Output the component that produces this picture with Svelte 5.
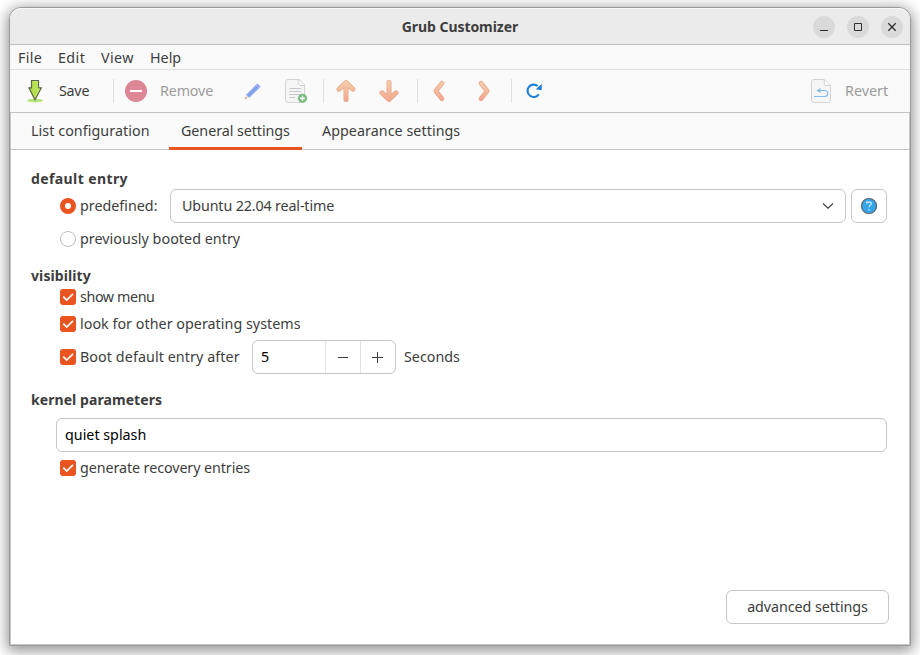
<script>
  let tab = $state('General settings');
  let boot = $state('predefined');
  let checks = $state({ menu: true, os: true, timeout: true, recovery: true });
  let seconds = $state(5);
  let kernel = $state('quiet splash');
  const tabs = [
    { name: 'List configuration', width: 158, spacing: 0.06 },
    { name: 'General settings', width: 133, spacing: -0.06 },
    { name: 'Appearance settings', width: 170, spacing: 0.05 },
  ];
</script>

{#snippet check(key, label, spacing)}
  <label class="option">
    <input type="checkbox" bind:checked={checks[key]} />
    <span class="box" class:on={checks[key]}>
      <svg width="16" height="16" viewBox="0 0 16 16"><path d="M3.3 7.6 6.7 11 13 4.9" fill="none" stroke="#fff" stroke-width="1.7" /></svg>
    </span>
    <span style="letter-spacing:{spacing}px">{label}</span>
  </label>
{/snippet}

{#snippet radio(value, label, spacing)}
  <label class="option">
    <input type="radio" name="boot" {value} bind:group={boot} />
    <span class="dot" class:on={boot === value}></span>
    <span style="letter-spacing:{spacing}px">{label}</span>
  </label>
{/snippet}

<div class="desktop">
  <div class="window">
    <header>
      <h1>Grub Customizer</h1>
      <div class="controls">
        <button aria-label="Minimize"><svg width="22" height="22"><path d="M7 14.5h8" stroke="#2e2e2e" /></svg></button>
        <button aria-label="Maximize"><svg width="22" height="22"><path d="M7.5 7.5h7v7h-7z" fill="none" stroke="#2e2e2e" /></svg></button>
        <button aria-label="Close"><svg width="22" height="22"><path d="m7.3 7.3 7.4 7.4m0-7.4-7.4 7.4" stroke="#2e2e2e" stroke-width="1.3" /></svg></button>
      </div>
    </header>

    <nav class="menu">
      <span class="m1">File</span><span class="m2">Edit</span><span class="m3">View</span><span class="m4">Help</span>
    </nav>

    <div class="toolbar">
      <svg class="save-icon" width="20" height="24" viewBox="0 0 20 24">
        <ellipse cx="10" cy="21.5" rx="8" ry="1.7" fill="#b7e37b" />
        <path d="M6.5 1.5h7v7.3h2.8L10 20.8 3.9 8.8h2.6z" fill="#b5df4d" stroke="#5b6744" stroke-width="1.2" />
        <path d="M7.7 2.7h4.6v7.2h2L10 18.2" fill="none" stroke="#cdef84" stroke-width=".8" />
      </svg>
      <span class="save">Save</span>
      <i class="sep"></i>
      <svg class="remove-icon" width="22" height="22" viewBox="0 0 22 22"><circle cx="11" cy="11" r="11" fill="#dc8696" /><path d="M5 11h12" stroke="#fff" stroke-width="2" /></svg>
      <span class="remove">Remove</span>
      <svg class="pencil" width="18" height="18" viewBox="0 0 18 18">
        <path d="m1 17 1.1-4.3 3.2 3.1z" fill="#f3dcc4" /><path d="m1 17 .5-2 1.5 1.5z" fill="#969696" />
        <path d="M2.1 12.7 13.2 1.6l3.5 3.1L5.3 15.8z" fill="#91a9ef" />
        <path d="m4 14 11-11" stroke="#7896ea" stroke-width="1.1" /><path d="m12 2.8 3.5 3.2" stroke="#c0ccf0" stroke-width=".8" />
      </svg>
      <svg class="doc" width="23" height="24" viewBox="0 0 23 24">
        <path d="M3 .5h11.3l5.2 5.3V21a2.5 2.5 0 0 1-2.5 2.5H3A2.5 2.5 0 0 1 .5 21V3A2.5 2.5 0 0 1 3 .5z" fill="#f6f6f6" stroke="#d3d3d3" />
        <path d="M13.8.8v3.7a2 2 0 0 0 2 2h3.7" fill="#fff" stroke="#d3d3d3" />
        <path d="M4.3 9.5h12M4.3 12.5h12M4.3 15.5h12M4.3 18.5h6" stroke="#c9c9c9" />
        <circle cx="17.5" cy="19.3" r="4.6" fill="#7dbd84" /><path d="M15 19.3h5m-2.5-2.5v5" stroke="#fff" stroke-width="1.3" />
      </svg>
      <i class="sep"></i>
      <svg class="up" width="20" height="24" viewBox="0 0 20 24">
        <defs><linearGradient id="warm" x1="0" y1="0" x2="0" y2="24" gradientUnits="userSpaceOnUse"><stop stop-color="#f5d4ae" /><stop offset="1" stop-color="#f2a28b" /></linearGradient></defs>
        <path d="M3 10.2 10 3.6l7 6.6M10 4v16.5" fill="none" stroke="#e9a489" stroke-width="5" stroke-linecap="round" stroke-linejoin="round" />
        <path d="M3 10.2 10 3.6l7 6.6M10 4v16.5" fill="none" stroke="url(#warm)" stroke-width="3.6" stroke-linecap="round" stroke-linejoin="round" />
      </svg>
      <svg class="down" width="20" height="24" viewBox="0 0 20 24">
        <path d="m3 13.8 7 6.6 7-6.6M10 20V3.5" fill="none" stroke="#e9a489" stroke-width="5" stroke-linecap="round" stroke-linejoin="round" />
        <path d="m3 13.8 7 6.6 7-6.6M10 20V3.5" fill="none" stroke="url(#warm)" stroke-width="3.6" stroke-linecap="round" stroke-linejoin="round" />
      </svg>
      <i class="sep"></i>
      <svg class="left" width="14" height="24" viewBox="0 0 14 24">
        <path d="M10 4.3 3.8 12l6.2 7.7" fill="none" stroke="#e9a489" stroke-width="4.6" stroke-linecap="round" stroke-linejoin="round" />
        <path d="M10 4.3 3.8 12l6.2 7.7" fill="none" stroke="url(#warm)" stroke-width="3.2" stroke-linecap="round" stroke-linejoin="round" />
      </svg>
      <svg class="right" width="14" height="24" viewBox="0 0 14 24">
        <path d="m4 4.3 6.2 7.7L4 19.7" fill="none" stroke="#e9a489" stroke-width="4.6" stroke-linecap="round" stroke-linejoin="round" />
        <path d="m4 4.3 6.2 7.7L4 19.7" fill="none" stroke="url(#warm)" stroke-width="3.2" stroke-linecap="round" stroke-linejoin="round" />
      </svg>
      <i class="sep"></i>
      <svg class="reload" width="16" height="16" viewBox="0 0 16 16">
        <path d="M12.8 11.4A6.2 6.2 0 1 1 11.7 3" fill="none" stroke="#1b7fd6" stroke-width="2.1" /><path d="M15.7 1v6.2l-5.9-1z" fill="#1b7fd6" />
      </svg>
      <svg class="revert-icon" width="20" height="24" viewBox="0 0 20 24">
        <path d="M3 .5h10.3l6.2 6V21a2.5 2.5 0 0 1-2.5 2.5H3A2.5 2.5 0 0 1 .5 21V3A2.5 2.5 0 0 1 3 .5z" fill="#f6f6f6" stroke="#d3d3d3" />
        <path d="M13.3.8v3.7a2 2 0 0 0 2 2h3.7" fill="#fff" stroke="#d3d3d3" />
        <path d="M3 17.5h10.7a3 3 0 0 0 0-6H8" fill="none" stroke="#83bce9" stroke-width="1.2" /><path d="M5.3 11.5 9.5 9v5z" fill="#83bce9" />
      </svg>
      <span class="revert">Revert</span>
    </div>

    <div class="notebook">
      <div class="tabs">
        {#each tabs as t}
          <button class:active={tab === t.name} style="width:{t.width}px;letter-spacing:{t.spacing}px" onclick={() => (tab = t.name)}>{t.name}</button>
        {/each}
      </div>
      <main>
        <h2 class="h-default">default entry</h2>
        <div class="row predefined">
          {@render radio('predefined', 'predefined:', 0)}
          <div class="combo"><span>Ubuntu 22.04 real-time</span><svg width="12" height="8" viewBox="0 0 12 8"><path d="m1 1.5 5 4.7 5-4.7" fill="none" stroke="#3d3d3d" stroke-width="1.1" /></svg></div>
          <button class="help" aria-label="Help">
            <svg width="18" height="18" viewBox="0 0 18 18"><circle cx="9" cy="9" r="7.5" fill="#35a5ea" stroke="#5a6368" stroke-width="1.2" /><path d="M6.7 6.4V5.2h3.1q1.5 0 1.5 1.4c0 1.5-2.3 1.7-2.3 3.7M9 12v1.5" fill="none" stroke="#d9effc" stroke-width="1.2" /></svg>
          </button>
        </div>
        <div class="row previous">{@render radio('previous', 'previously booted entry', 0.04)}</div>

        <h2 class="h-visibility">visibility</h2>
        <div class="row show">{@render check('menu', 'show menu', -0.4)}</div>
        <div class="row line">{@render check('os', 'look for other operating systems', 0.03)}</div>
        <div class="row timeout">
          {@render check('timeout', 'Boot default entry after', 0.08)}
          <div class="spin">
            <span>{seconds}</span>
            <button aria-label="Decrease" onclick={() => seconds--}><svg width="12" height="12"><path d="M1 6.5h10" stroke="#3d3d3d" /></svg></button>
            <button aria-label="Increase" onclick={() => seconds++}><svg width="12" height="12"><path d="M0 6.5h11m-5.5-5.5v11" stroke="#3d3d3d" /></svg></button>
          </div>
          <span class="seconds">Seconds</span>
        </div>

        <h2 class="h-kernel">kernel parameters</h2>
        <input class="kernel" aria-label="kernel parameters" bind:value={kernel} />
        <div class="row line">{@render check('recovery', 'generate recovery entries', -0.08)}</div>
        <button class="advanced">advanced settings</button>
      </main>
    </div>
  </div>
</div>

<style>
  :global(body) { margin: 0; background: #fff; }
  * { box-sizing: border-box; }
  .desktop { width: 920px; height: 655px; padding: 7px 9px 9px; overflow: hidden; background: #fff; font: 14.3px/20px "Noto Sans", "Open Sans", sans-serif; color: #3d3d3d; }
  .window { width: 902px; height: 639px; display: flex; flex-direction: column; border: 1px solid #999; border-radius: 12px 12px 0 0; background: #fafafa; overflow: hidden; box-shadow: 0 3px 14px 2px rgba(0, 0, 0, .42); }
  button { padding: 0; border: 0; background: none; font: inherit; color: inherit; }
  svg { display: block; flex: none; }
  span { white-space: nowrap; }
  header { flex: none; height: 37px; display: grid; grid-template-columns: 1fr auto 1fr; align-items: center; background: #ebebeb; border-top: 1px solid #f9f9f9; border-bottom: 1px solid #bfbfbf; border-radius: 11px 11px 0 0; }
  h1 { grid-column: 2; margin: 0; font: bold 14px/20px "Noto Sans", sans-serif; letter-spacing: -.06px; }
  .controls { display: flex; gap: 12px; justify-self: end; padding-right: 7px; }
  .controls button { width: 22px; height: 22px; border-radius: 50%; background: #dadada; }
  .menu { flex: none; height: 25px; display: flex; align-items: center; padding: 2px 0 0 8px; border-bottom: 1px solid #dfdfdf; }
  .m1 { width: 40px; letter-spacing: .3px; }
  .m2 { width: 43px; letter-spacing: .4px; }
  .m3 { width: 49px; letter-spacing: .4px; }
  .toolbar { flex: none; height: 43px; display: flex; align-items: center; border-bottom: 1px solid #c3c3c3; }
  .sep { width: 1px; height: 24px; background: #dfdfdf; flex: none; }
  .save-icon { margin-left: 15px; }
  .save { width: 54px; margin-left: 14px; letter-spacing: -.25px; }
  .remove-icon { margin-left: 11px; }
  .remove { width: 83px; margin-left: 13px; letter-spacing: -.15px; }
  .remove, .revert { color: #9c9c9c; }
  .pencil { margin-left: 1px; }
  .doc { margin: 0 15px 0 23px; }
  .up { margin-left: 12px; }
  .down { margin: 0 18px 0 23px; }
  .left { margin-left: 14px; }
  .right { margin: 0 20px 0 31px; }
  .reload { margin-left: 14px; }
  .revert-icon { margin-left: auto; }
  .revert { width: 65px; margin-left: 14px; }
  .notebook { flex: 1; display: flex; flex-direction: column; border: solid #c6c6c6; border-width: 0 1px 1px; background: #fff; }
  .tabs { flex: none; height: 37px; display: flex; background: #fafafa; box-shadow: inset 0 -1px #c6c6c6; }
  .tabs button { height: 37px; padding: 2px 0 0 12px; text-align: left; border-bottom: 3px solid transparent; white-space: nowrap; }
  .tabs button:first-child { padding-left: 20px; }
  .tabs button:last-child { padding-left: 20px; }
  .tabs button.active { border-color: #e95420; }
  main { flex: 1; display: flex; flex-direction: column; padding: 19px 22px 20px 20px; }
  h2 { margin: 0; font: bold 14px/20px "Noto Sans", sans-serif; flex: none; }
  .h-default { letter-spacing: .4px; }
  .row { flex: none; display: flex; align-items: center; padding-left: 29px; }
  .predefined { height: 34px; }
  .previous { height: 32px; }
  .line { height: 27px; }
  .option { display: flex; align-items: center; gap: 4px; }
  .option input { position: absolute; opacity: 0; }
  .predefined .option { width: 110px; }
  .box, .dot { width: 16px; height: 16px; border: 1px solid #bdbdbd; background: #fff; }
  .box { border-radius: 3px; } .dot { border-radius: 50%; }
  .box svg { display: none; }
  .box.on { border: 0; background: #e95420; } .box.on svg { display: block; }
  .dot.on { border: 5.5px solid #e95420; }
  .combo { width: 676px; height: 34px; display: flex; align-items: center; justify-content: space-between; padding: 0 11px; border: 1px solid #c6c6c6; border-radius: 6px; letter-spacing: -.14px; }
  .help { width: 36px; height: 34px; margin-left: 5px; display: flex; align-items: center; justify-content: center; border: 1px solid #c6c6c6; border-radius: 6px; }
  .h-visibility { margin-top: 11px; letter-spacing: .1px; }
  .show { height: 24px; padding-bottom: 3px; }
  .timeout { height: 38px; padding-top: 2px; }
  .timeout .option { width: 192px; }
  .spin { width: 144px; height: 34px; display: flex; border: 1px solid #c6c6c6; border-radius: 6px; color: #000; }
  .spin > span { width: 72px; padding-left: 8px; line-height: 32px; }
  .spin button { width: 35px; border-left: 1px solid #e3e3e3; display: grid; place-items: center; }
  .seconds { margin-left: 8px; }
  .h-kernel { margin-top: 15px; letter-spacing: .07px; }
  .kernel { flex: none; height: 34px; margin: 8px 0 2px 25px; padding: 0 8px 2px; border: 1px solid #c6c6c6; border-radius: 6px; font: inherit; color: #000; outline: 0; }
  .advanced { width: 163px; height: 34px; margin: auto -2px 0 0; align-self: flex-end; border: 1px solid #c6c6c6; border-radius: 6px; letter-spacing: -.06px; }
</style>
